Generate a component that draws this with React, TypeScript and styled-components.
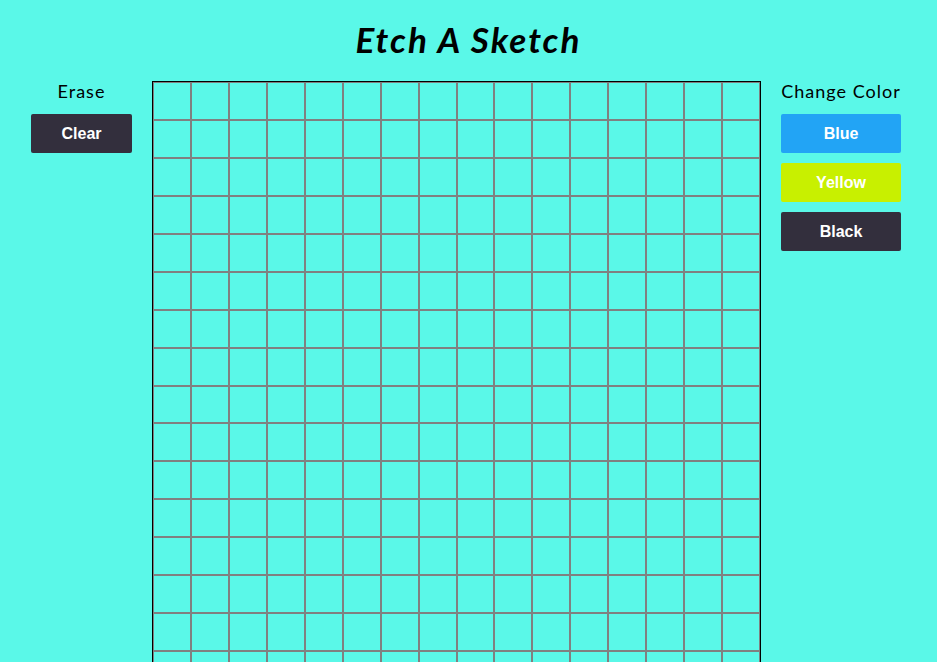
import React, { useState } from "react";
import styled, { createGlobalStyle } from "styled-components";

const GlobalStyle = createGlobalStyle`
  *, *::before, *::after { box-sizing: border-box; }
  body {
    margin: 0;
    background: #5af8e8;
    color: #000;
    font-family: Lato, "Open Sans", sans-serif;
    overflow: hidden;
  }
`;

const Page = styled.div`
  display: flex;
  flex-direction: column;
  height: 100vh;
  overflow: hidden;
`;

const Title = styled.h1`
  margin: 0;
  padding: 20px 0 22px;
  font-size: 35px;
  line-height: 39px;
  font-style: italic;
  font-weight: 700;
  letter-spacing: 2px;
  text-align: center;
`;

const Workspace = styled.main`
  display: flex;
  justify-content: center;
  align-items: flex-start;
  gap: 20px;
  padding: 0 36px 0 31px;
`;

const Panel = styled.section<{ $width: number }>`
  display: flex;
  flex-direction: column;
  flex: none;
  gap: 10px;
  min-width: ${(p) => p.$width}px;
`;

const PanelTitle = styled.h2`
  margin: 0;
  padding-bottom: 3px;
  font-size: 18px;
  line-height: 20px;
  font-weight: 400;
  letter-spacing: 1px;
  text-align: center;
`;

const Button = styled.button<{ $color: string }>`
  border: 0;
  border-radius: 2px;
  padding: 10px 30px;
  background: ${(p) => p.$color};
  color: #fff;
  font: 700 16px/19px "Liberation Sans", Arial, sans-serif;
  cursor: pointer;
`;

const Board = styled.div`
  display: grid;
  grid-template-columns: repeat(16, 1fr);
  flex: 1;
  border: 1px solid #000;
`;

const Cell = styled.div<{ $fill?: string }>`
  aspect-ratio: 1;
  border: 1px solid #808080;
  background: ${(p) => p.$fill ?? "transparent"};
`;

const colors = [
  { name: "Blue", value: "#22a4f5" },
  { name: "Yellow", value: "#c8f000" },
  { name: "Black", value: "#332f3d" },
];

const cells = Array.from({ length: 256 }, (_, i) => i);

export default function App() {
  const [color, setColor] = useState(colors[2].value);
  const [fills, setFills] = useState<Record<number, string>>({});

  return (
    <Page>
      <GlobalStyle />
      <Title>Etch A Sketch</Title>
      <Workspace>
        <Panel $width={101}>
          <PanelTitle>Erase</PanelTitle>
          <Button $color="#332f3d" onClick={() => setFills({})}>Clear</Button>
        </Panel>
        <Board>
          {cells.map((i) => (
            <Cell key={i} $fill={fills[i]} onMouseEnter={() => setFills((f) => ({ ...f, [i]: color }))} />
          ))}
        </Board>
        <Panel $width={120}>
          <PanelTitle>Change Color</PanelTitle>
          {colors.map((c) => (
            <Button key={c.name} $color={c.value} onClick={() => setColor(c.value)}>{c.name}</Button>
          ))}
        </Panel>
      </Workspace>
    </Page>
  );
}
